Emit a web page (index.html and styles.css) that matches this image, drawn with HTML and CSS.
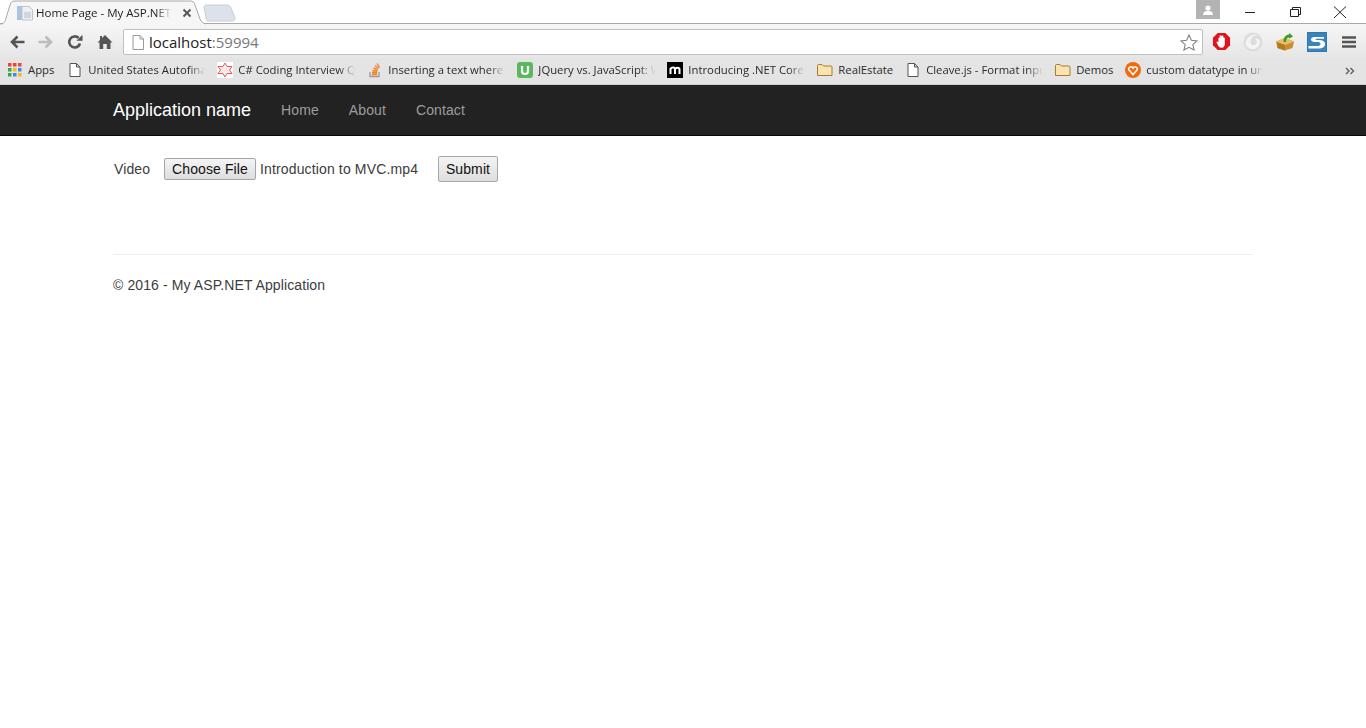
FILE: index.html
```html
<!DOCTYPE html>
<html lang="en">
<head>
<meta charset="utf-8">
<title>Home Page - My ASP.NET Application</title>
<link rel="stylesheet" href="styles.css">
</head>
<body>
<header class="chrome">
  <div class="tabstrip">
    <svg class="tab-shape" width="240" height="25" viewBox="0 0 240 25"><path d="M0 24 C4 24 5 22 6 18 L10 5 C11 2 12 1 15 1 L190 1 C193 1 194 2 195 5 L200 19 C201 22 203 23 206 24" fill="#f6f6f6" stroke="#a8a8a8"/><path d="M204 7 C204 6 205 5 207 5 L227 5 C229 5 230 6 231 8 L235 18 C235 20 234 21 232 21 L209 21 C207 21 206 20 206 18 Z" fill="#dce2ea" stroke="#c8ccd2"/></svg>
    <div class="tab">
      <svg class="tab-icon" width="16" height="16" viewBox="0 0 16 16"><rect x="0" y="1" width="5" height="14" fill="#a9c4e2"/><path d="M5 1.500 H12 L15.500 4.500 V15 H5 Z" fill="#eeeff3" stroke="#c0c4cc"/><path d="M7 8 H14 M7 10 H14 M7 12 H14" stroke="#b4bac6"/></svg>
      <span class="tab-title">Home Page - My ASP.NET Application</span>
      <svg class="tab-close" width="10" height="10" viewBox="0 0 10 10"><path d="M1.500 1.500 L8.500 8.500 M8.500 1.500 L1.500 8.500" stroke="#5a5a5a" stroke-width="2"/></svg>
    </div>
    <div class="win-controls">
      <div class="avatar"><svg width="12" height="10" viewBox="0 0 12 10"><circle cx="6" cy="3" r="2.600" fill="#fff"/><path d="M1 10 C1 6.500 3.500 6 6 6 C8.500 6 11 6.500 11 10 Z" fill="#fff"/></svg></div>
      <svg class="win-btn" width="46" height="24" viewBox="0 0 46 24"><path d="M18 12.500 H28" stroke="#222"/></svg>
      <svg class="win-btn" width="46" height="24" viewBox="0 0 46 24"><path d="M18.500 9.500 H26.500 V16.500 H18.500 Z M20.500 9.500 V7.500 H28.500 V14.500 H26.500" fill="none" stroke="#222"/></svg>
      <svg class="win-btn" width="46" height="24" viewBox="0 0 46 24"><path d="M17 6.500 L29 18 M29 6.500 L17 18" stroke="#222"/></svg>
    </div>
  </div>
  <div class="toolbar">
    <svg class="nav-ico" width="16" height="16" viewBox="0 0 16 16"><path d="M15.500 8 H4 M8.500 2.500 L3 8 L8.500 13.500" fill="none" stroke="#555" stroke-width="2.600"/></svg>
    <svg class="nav-ico fwd" width="16" height="16" viewBox="0 0 16 16"><path d="M.5 8 H12 M7.500 2.500 L13 8 L7.500 13.500" fill="none" stroke="#bcbcbc" stroke-width="2.600"/></svg>
    <svg class="nav-ico reload" width="16" height="16" viewBox="0 0 16 16"><path d="M13 9.500 A5.500 5.500 0 1 1 11.600 4" fill="none" stroke="#555" stroke-width="2.600"/><path d="M9.500 6.800 H15.500 V0.800 Z" fill="#555"/></svg>
    <svg class="nav-ico home" width="16" height="16" viewBox="0 0 16 16"><path d="M8 1 L15.500 8.500 H13.500 V15 H9.800 V10 H6.200 V15 H2.500 V8.500 H.5 L3 6 V2 H5 V4 Z" fill="#555"/></svg>
    <div class="omnibox">
      <svg class="omni-page" width="12" height="15" viewBox="0 0 12 15"><path d="M1 .5 H8 L11.500 4 V14.500 H1 Z M8 .5 V4 H11.500" fill="#fff" stroke="#9a9a9a"/></svg>
      <span class="url"><span class="url-host">localhost</span>:59994</span>
      <svg class="star" width="18" height="17" viewBox="0 0 19 18"><path d="M9.500 1 L12 6.700 L18 7.300 L13.500 11.300 L14.900 17 L9.500 14 L4.100 17 L5.500 11.300 L1 7.300 L7 6.700 Z" fill="#fff" stroke="#808080" stroke-width="1.100"/></svg>
    </div>
    <div class="ext-row">
      <svg width="19" height="19" viewBox="0 0 20 20"><path d="M6 1 H14 L19 6 V14 L14 19 H6 L1 14 V6 Z" fill="#e0141c"/><path d="M6.800 11 V6.500 A1 1 0 0 1 8 6 V4.500 A1 1 0 0 1 10 4.500 A1 1 0 0 1 12 5 V6 A1 1 0 0 1 13.500 6.500 V12.500 C13.500 15 12 16.500 10 16.500 C8 16.500 7 15.500 6 13.500 L4.800 10.800 C4.500 9.800 5.800 9.300 6.800 11 Z" fill="#fff"/></svg>
      <svg width="20" height="20" viewBox="0 0 20 20"><circle cx="10" cy="10" r="9.500" fill="#dcdcdc"/><path d="M3 13 C1.500 7 8 1 14.500 3 C10 3.500 7 6.500 7.500 10.500 C8 14 13 14 13.800 10.500 C14.200 8.500 13 7 11.500 6.800 C15 5.800 17.500 8 16.800 11.500 C15.800 16.500 10 18.500 6.500 16.500 C5 15.700 3.500 14.500 3 13 Z" fill="#f4f4f4"/></svg>
      <svg width="20" height="20" viewBox="0 0 20 20"><path d="M1 9.500 L10 6 L19 9.500 L17.500 16 L10 18.500 L2.500 16 Z" fill="#c98e2e"/><path d="M1 9.500 L10 13 L19 9.500 L10 6 Z" fill="#e9bd6a"/><path d="M10 13 V18.500 L2.500 16 V10.500 Z" fill="#b27a20"/><path d="M8.500 10 C8.500 5.500 10.500 3 14 2.500 L14.500 1 L18 4.500 L14.500 6.500 L14 5.500 C12 5.500 11 7.500 11 10 Z" fill="#3f9a25"/></svg>
      <svg width="20" height="20" viewBox="0 0 20 20"><rect x=".5" y=".5" width="19" height="19" fill="#3b83bd" stroke="#2d79b5"/><path d="M17 5 H7.500 C5 5 4 6 4 7.500 C4 9.500 6 10 9.500 10 C13 10 13.500 11 13.500 12 C13.500 13.500 12 14 10 14 H1.500 V16.500 H11.500 C15.500 16.500 18 15 18 12 C18 9 15.500 8 11 8 C9 8 8.500 7.800 8.500 7.300 C8.500 7 9 6.800 10 6.800 H17 Z" fill="#fff"/></svg>
    </div>
    <svg class="menu" width="14" height="12" viewBox="0 0 14 12"><path d="M0 1.500 H14 M0 6 H14 M0 10.500 H14" stroke="#555" stroke-width="2.400"/></svg>
  </div>
  <nav class="bookmarks">
    <div class="bm bm-apps">
      <svg width="14" height="14" viewBox="0 0 14 14"><rect width="3.500" height="3.500" fill="#e8453c"/><rect x="5" width="3.500" height="3.500" fill="#e8453c"/><rect x="10" width="3.500" height="3.500" fill="#e8453c"/><rect y="5" width="3.500" height="3.500" fill="#34a853"/><rect x="5" y="5" width="3.500" height="3.500" fill="#fbbc05"/><rect x="10" y="5" width="3.500" height="3.500" fill="#4285f4"/><rect y="10" width="3.500" height="3.500" fill="#34a853"/><rect x="5" y="10" width="3.500" height="3.500" fill="#4285f4"/><rect x="10" y="10" width="3.500" height="3.500" fill="#fbbc05"/></svg>
      <span class="bm-label">Apps</span>
    </div>
    <div class="bm">
      <svg class="bm-ico" width="16" height="16" viewBox="0 0 16 16"><path d="M3 1.500 H9.500 L13 5 V14.500 H3 Z M9.500 1.500 V5 H13" fill="#fff" stroke="#555"/></svg>
      <span class="bm-label fade">United States Autofinance</span>
    </div>
    <div class="bm">
      <svg class="bm-ico" width="16" height="16" viewBox="0 0 16 16"><rect width="16" height="16" fill="#fff"/><path d="M8 1 L10 4.500 H15 L12.500 8 L15 11.500 H10 L8 15 L6 11.500 H1 L3.500 8 L1 4.500 H6 Z" fill="#fbeaea" stroke="#e06060"/></svg>
      <span class="bm-label fade">C# Coding Interview Questions</span>
    </div>
    <div class="bm">
      <svg class="bm-ico" width="16" height="16" viewBox="0 0 16 16"><path d="M3 10 V14.500 H12 V10" fill="none" stroke="#a09a90" stroke-width="1.300"/><path d="M5 12.500 H10 M5 10.500 L10 11 M5.500 8.500 L10.200 9.500 M6.500 6 L10.700 8 M8 3.500 L11.500 6.500 M10 1.500 L12.500 5.500" stroke="#f48024" stroke-width="1.400"/></svg>
      <span class="bm-label fade">Inserting a text where the cursor is</span>
    </div>
    <div class="bm">
      <svg class="bm-ico" width="16" height="16" viewBox="0 0 16 16"><rect width="16" height="16" rx="3" fill="#5cb85c"/><path d="M5 4 V9 C5 13 11 13 11 9 V4" fill="none" stroke="#fff" stroke-width="2.200"/></svg>
      <span class="bm-label fade">JQuery vs. JavaScript: What</span>
    </div>
    <div class="bm">
      <svg class="bm-ico" width="16" height="16" viewBox="0 0 16 16"><rect width="16" height="16" fill="#000"/><path d="M3.500 12 V6 M3.500 7 C4.500 5 8 5 8 7.500 V12 M8 7.500 C8.500 5 12.500 5 12.500 7.500 V12" fill="none" stroke="#fff" stroke-width="2"/></svg>
      <span class="bm-label fade">Introducing .NET Core and more</span>
    </div>
    <div class="bm">
      <svg class="bm-ico" width="16" height="16" viewBox="0 0 16 16"><path d="M.5 13.500 V3.500 C.5 2.800 1 2.500 1.500 2.500 H5 L6.500 4 H14 C14.500 4 15 4.400 15 5 V13.500 Z" fill="#fbe3ad" stroke="#a57c35"/></svg>
      <span class="bm-label">RealEstate</span>
    </div>
    <div class="bm">
      <svg class="bm-ico" width="16" height="16" viewBox="0 0 16 16"><path d="M3 1.500 H9.500 L13 5 V14.500 H3 Z M9.500 1.500 V5 H13" fill="#fff" stroke="#555"/></svg>
      <span class="bm-label fade">Cleave.js - Format input text</span>
    </div>
    <div class="bm">
      <svg class="bm-ico" width="16" height="16" viewBox="0 0 16 16"><path d="M.5 13.500 V3.500 C.5 2.800 1 2.500 1.500 2.500 H5 L6.500 4 H14 C14.500 4 15 4.400 15 5 V13.500 Z" fill="#fbe3ad" stroke="#a57c35"/></svg>
      <span class="bm-label">Demos</span>
    </div>
    <div class="bm">
      <svg class="bm-ico" width="16" height="16" viewBox="0 0 16 16"><circle cx="8" cy="8" r="8" fill="#f26a0f"/><path d="M8 12.500 L4 8 C2.500 5.500 6.500 3.500 8 6 C9.500 3.500 13.500 5.500 12 8 Z" fill="none" stroke="#fff" stroke-width="1.600"/></svg>
      <span class="bm-label fade">custom datatype in umbraco</span>
    </div>
    <svg class="bm-more" width="10" height="8" viewBox="0 0 10 8"><path d="M1 1 L4 4 L1 7 M5.500 1 L8.500 4 L5.500 7" fill="none" stroke="#666" stroke-width="1.500"/></svg>
  </nav>
</header>
<div class="navbar">
  <div class="container nav-inner">
    <a class="brand">Application name</a>
    <a class="nav-link">Home</a>
    <a class="nav-link">About</a>
    <a class="nav-link">Contact</a>
  </div>
</div>
<main class="container">
  <form class="upload">
    <span class="field-label">Video</span>
    <span class="file-btn">Choose File</span>
    <span class="file-name">Introduction to MVC.mp4</span>
    <span class="submit-btn">Submit</span>
  </form>
  <hr class="rule">
  <footer class="foot">© 2016 - My ASP.NET Application</footer>
</main>
</body>
</html>
```

FILE: styles.css
```css
* { box-sizing: border-box; }
html, body { margin: 0; background: #fff; }
body { font-family: "Liberation Sans", Arial, sans-serif; font-size: 14px; line-height: 20px; letter-spacing: .1px; color: #3c3c3c; overflow: hidden; }

.chrome { height: 85px; font-family: "Open Sans", "Noto Sans", sans-serif; letter-spacing: 0; }

.tabstrip { position: relative; display: flex; height: 24px; background: #fff; border-bottom: 1px solid #a8a8a8; }
.tab-shape { position: absolute; left: 0; top: 0; }
.tab { position: relative; display: flex; align-items: center; width: 197px; height: 24px; padding: 2px 0 0 17px; }
.tab-icon { flex: none; }
.tab-title { width: 136px; margin-left: 3px; overflow: hidden; white-space: nowrap; font-size: 11.500px; color: #222; -webkit-mask-image: linear-gradient(to right, #000 88%, transparent); mask-image: linear-gradient(to right, #000 88%, transparent); }
.tab-close { flex: none; margin-left: 10px; }
.win-controls { position: relative; display: flex; align-items: flex-start; margin-left: auto; padding-right: 3px; }
.avatar { display: flex; align-items: center; justify-content: center; width: 24px; height: 19px; margin-right: 7px; background: #b3b3b3; }
.win-btn { display: block; margin-right: -1px; }
.win-btn:last-child { margin-right: 0; }

.toolbar { display: flex; align-items: center; height: 34px; padding: 1px 10px 0 9px; background: linear-gradient(#f6f6f6, #e6e6e6); }
.nav-ico { flex: none; }
.fwd { margin-left: 13px; }
.reload { margin-left: 13px; }
.home { margin-left: 14px; }
.omnibox { display: flex; align-items: center; width: 1081px; height: 26px; margin: 1px 0 0 10px; padding: 0 4px 0 8px; background: #fff; border: 1px solid #c0c0c0; border-radius: 2px; }
.omni-page { flex: none; }
.url { margin-left: 5px; font-size: 15px; color: #777; }
.url-host { color: #222; }
.star { flex: none; margin-left: auto; }
.ext-row { display: flex; align-items: center; gap: 12px; margin-left: 9px; }
.menu { flex: none; margin-left: 15px; }

.bookmarks { position: relative; display: flex; align-items: center; gap: 12px; height: 27px; padding: 0 0 2px 8px; background: #e4e4e4; border-bottom: 1px solid #cfcfcf; }
.bm { display: flex; align-items: center; gap: 5px; font-size: 11.300px; color: #2a2a2a; white-space: nowrap; }
.bm-apps { gap: 6px; margin-right: 1px; }
.bm-ico { flex: none; }
.bm-label { display: block; }
.fade { width: 117px; overflow: hidden; -webkit-mask-image: linear-gradient(to right, #000 86%, transparent); mask-image: linear-gradient(to right, #000 86%, transparent); }
.bm-more { position: absolute; left: 1345px; top: 9px; }

.container { width: 1170px; margin: 0 auto; padding: 0 15px; }
.navbar { height: 51px; background: #222; border-bottom: 1px solid #080808; }
.nav-inner { display: flex; align-items: center; height: 50px; letter-spacing: .1px; }
.brand { font-size: 18px; color: #fff; margin-right: 15px; letter-spacing: 0; }
.nav-link { padding: 0 15px; color: #9d9d9d; }

.upload { display: flex; align-items: center; height: 26px; margin: 20px 0 0; }
.field-label { width: 51px; padding-left: 1px; }
.file-btn, .submit-btn { display: flex; align-items: center; justify-content: center; font-size: 14px; color: #111; background: linear-gradient(#f4f4f4, #dedede); border: 1px solid #a6a6a6; border-radius: 2px; }
.file-btn { width: 92px; height: 22px; letter-spacing: .1px; }
.file-name { width: 178px; margin-left: 4px; letter-spacing: .14px; }
.submit-btn { width: 60px; height: 26px; letter-spacing: .1px; }

.rule { height: 1px; margin: 72px 0 0; border: 0; background: #eee; }
.foot { margin-top: 20px; }
```
